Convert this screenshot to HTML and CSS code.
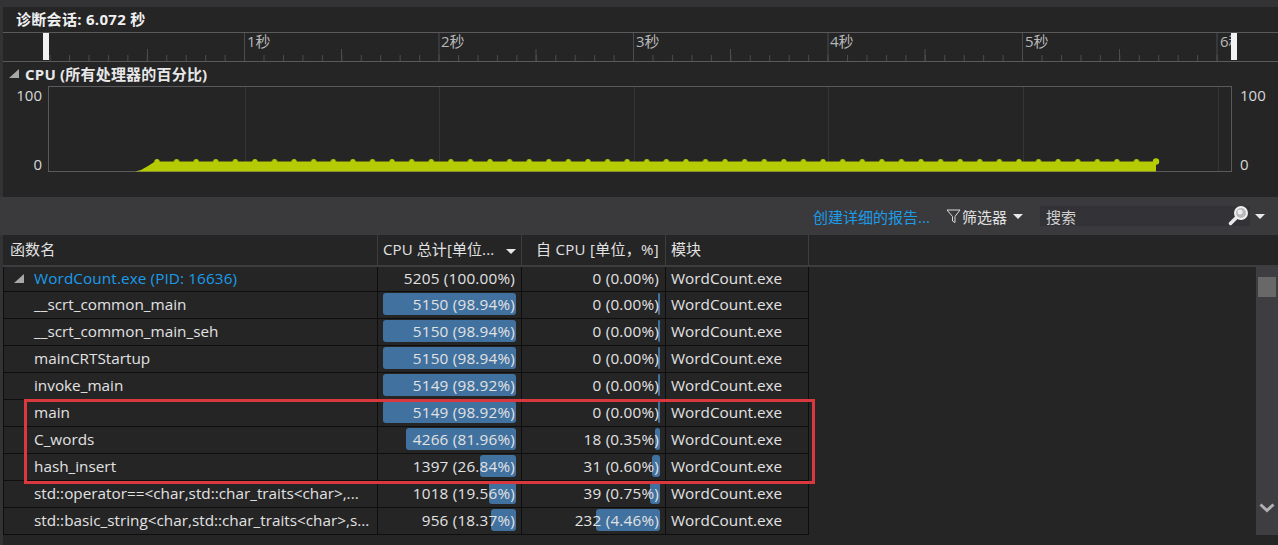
FILE: index.html
```html
<!DOCTYPE html>
<html lang="zh-CN">
<head>
    <meta charset="UTF-8">
    <title>诊断会话</title>
    <link rel="stylesheet" href="styles.css">
</head>
<body>
    <div class="app">
        <div class="session-title">诊断会话: 6.072 秒</div>

        <!-- 时间标尺 -->
        <svg class="ruler" width="1275" height="30" viewBox="3 32 1275 30">
            <defs>
                <pattern id="minor-ticks" x="69" y="54" width="19.45" height="7" patternUnits="userSpaceOnUse">
                    <rect x="0" y="1" width="1" height="6" fill="#4a4a4c"/>
                </pattern>
                <clipPath id="ruler-clip"><rect x="0" y="32" width="1231" height="30"/></clipPath>
            </defs>
            <rect x="49" y="54" width="1182" height="7" fill="url(#minor-ticks)"/>
            <path class="ruler-line" d="M3 32.5H1278M3 61.5H1278"/>
            <path class="ruler-major" d="M244.5 33V61M439 33V61M633.5 33V61M828 33V61M1022.5 33V61M1217 33V61M147.5 49V61M341.5 49V61M536 49V61M730.5 49V61M925 49V61M1119.5 49V61"/>
            <text x="247" y="47">1秒</text>
            <text x="441" y="47">2秒</text>
            <text x="636" y="47">3秒</text>
            <text x="830" y="47">4秒</text>
            <text x="1025" y="47">5秒</text>
            <text x="1220" y="47" clip-path="url(#ruler-clip)">6秒</text>
            <rect class="handle" x="43" y="33" width="6" height="27"/>
            <rect class="handle" x="1231" y="33" width="6" height="27"/>
        </svg>

        <div class="cpu-title"><span class="arrow-open"></span>CPU (所有处理器的百分比)</div>

        <div class="chart-row">
            <div class="axis axis-left"><span>100</span><span>0</span></div>
            <svg class="chart" width="1185" height="87" viewBox="48 86 1185 87">
                <defs>
                    <pattern id="cpu-dots" x="157" y="155" width="19.59" height="10" patternUnits="userSpaceOnUse">
                        <circle cx="0" cy="6.5" r="2.6"/>
                        <circle cx="19.59" cy="6.5" r="2.6"/>
                    </pattern>
                </defs>
                <rect class="chart-box" x="48.5" y="86.5" width="1183" height="85"/>
                <path class="chart-grid" d="M245.5 87V171M439.5 87V171M634.5 87V171M828.5 87V171M1023.5 87V171M1218.5 87V171"/>
                <path class="cpu-area" d="M135 171.5L141 170L148 166L155 161.5L1156 161.5V171.5Z"/>
                <rect class="cpu-dots" x="154" y="155" width="990" height="8"/>
                <circle class="cpu-end" cx="1156" cy="161.5" r="3.2"/>
            </svg>
            <div class="axis axis-right"><span>100</span><span>0</span></div>
        </div>

        <div class="toolbar">
            <a class="report-link">创建详细的报告...</a>
            <div class="filter">
                <svg width="15" height="16" viewBox="0 0 15 16"><path d="M1 2H14L9 8.5V14.5L6.5 13V8.5Z" fill="none" stroke="#d8d8d8"/></svg>
                <span>筛选器</span>
                <span class="caret"></span>
            </div>
            <div class="search">
                <span>搜索</span>
                <svg width="22" height="22" viewBox="0 0 22 22">
                    <path d="M8 13L2.5 18.5" stroke="#e8e8e8" stroke-width="3.5" stroke-linecap="round"/>
                    <circle cx="13" cy="8" r="6" fill="#b8b8b8" stroke="#efefef" stroke-width="2"/>
                    <circle cx="12" cy="7" r="2.5" fill="#ececec"/>
                </svg>
            </div>
            <span class="caret search-caret"></span>
        </div>

        <div class="table-head">
            <div class="th col-name">函数名</div>
            <div class="th col-num">CPU 总计[单位...<span class="caret sort-caret"></span></div>
            <div class="th col-num th-right">自 CPU [单位，%]</div>
            <div class="th col-mod">模块</div>
        </div>

        <div class="table-body">
            <div class="rows">
                <div class="row row-first">
                    <div class="cell col-name name-root"><span class="arrow-open"></span>WordCount.exe (PID: 16636)</div>
                    <div class="cell col-num"><span class="val">5205 (100.00%)</span></div>
                    <div class="cell col-num"><span class="val">0 (0.00%)</span></div>
                    <div class="cell col-mod">WordCount.exe</div>
                </div>
                <div class="row">
                    <div class="cell col-name">__scrt_common_main</div>
                    <div class="cell col-num"><i class="bar" style="width:133px"></i><span class="val">5150 (98.94%)</span></div>
                    <div class="cell col-num"><i class="bar" style="width:2px"></i><span class="val">0 (0.00%)</span></div>
                    <div class="cell col-mod">WordCount.exe</div>
                </div>
                <div class="row">
                    <div class="cell col-name">__scrt_common_main_seh</div>
                    <div class="cell col-num"><i class="bar" style="width:133px"></i><span class="val">5150 (98.94%)</span></div>
                    <div class="cell col-num"><i class="bar" style="width:2px"></i><span class="val">0 (0.00%)</span></div>
                    <div class="cell col-mod">WordCount.exe</div>
                </div>
                <div class="row">
                    <div class="cell col-name">mainCRTStartup</div>
                    <div class="cell col-num"><i class="bar" style="width:133px"></i><span class="val">5150 (98.94%)</span></div>
                    <div class="cell col-num"><i class="bar" style="width:2px"></i><span class="val">0 (0.00%)</span></div>
                    <div class="cell col-mod">WordCount.exe</div>
                </div>
                <div class="row">
                    <div class="cell col-name">invoke_main</div>
                    <div class="cell col-num"><i class="bar" style="width:133px"></i><span class="val">5149 (98.92%)</span></div>
                    <div class="cell col-num"><i class="bar" style="width:2px"></i><span class="val">0 (0.00%)</span></div>
                    <div class="cell col-mod">WordCount.exe</div>
                </div>
                <div class="row">
                    <div class="cell col-name">main</div>
                    <div class="cell col-num"><i class="bar" style="width:133px"></i><span class="val">5149 (98.92%)</span></div>
                    <div class="cell col-num"><i class="bar" style="width:2px"></i><span class="val">0 (0.00%)</span></div>
                    <div class="cell col-mod">WordCount.exe</div>
                </div>
                <div class="row">
                    <div class="cell col-name">C_words</div>
                    <div class="cell col-num"><i class="bar" style="width:110px"></i><span class="val">4266 (81.96%)</span></div>
                    <div class="cell col-num"><i class="bar" style="width:5px"></i><span class="val">18 (0.35%)</span></div>
                    <div class="cell col-mod">WordCount.exe</div>
                </div>
                <div class="row">
                    <div class="cell col-name">hash_insert</div>
                    <div class="cell col-num"><i class="bar" style="width:36px"></i><span class="val">1397 (26.84%)</span></div>
                    <div class="cell col-num"><i class="bar" style="width:8px"></i><span class="val">31 (0.60%)</span></div>
                    <div class="cell col-mod">WordCount.exe</div>
                </div>
                <div class="row">
                    <div class="cell col-name">std::operator==&lt;char,std::char_traits&lt;char&gt;,...</div>
                    <div class="cell col-num"><i class="bar" style="width:27px"></i><span class="val">1018 (19.56%)</span></div>
                    <div class="cell col-num"><i class="bar" style="width:10px"></i><span class="val">39 (0.75%)</span></div>
                    <div class="cell col-mod">WordCount.exe</div>
                </div>
                <div class="row">
                    <div class="cell col-name">std::basic_string&lt;char,std::char_traits&lt;char&gt;,s...</div>
                    <div class="cell col-num"><i class="bar" style="width:25px"></i><span class="val">956 (18.37%)</span></div>
                    <div class="cell col-num"><i class="bar" style="width:64px"></i><span class="val">232 (4.46%)</span></div>
                    <div class="cell col-mod">WordCount.exe</div>
                </div>
                <div class="highlight"></div>
            </div>
            <div class="scrollbar">
                <div class="thumb"></div>
                <svg class="scroll-down" width="16" height="10" viewBox="0 0 16 10"><path d="M1.5 1.5L8 7.5L14.5 1.5" fill="none" stroke="#b0b0b0" stroke-width="3"/></svg>
            </div>
        </div>
    </div>
</body>
</html>
```

FILE: styles.css
```css
* {
    box-sizing: border-box;
}

body {
    margin: 0;
    background: #252526;
    color: #e2e2e2;
    font-family: "Open Sans", "Noto Sans CJK SC", sans-serif;
    font-size: 15px;
    overflow: hidden;
}

.app {
    width: 1278px;
    height: 545px;
    padding-left: 3px;
    border-top: 7px solid #333336;
    background: #252526;
    box-shadow: inset 3px 0 0 #333336;
    display: flex;
    flex-direction: column;
}

.session-title {
    height: 25px;
    padding-left: 13px;
    font-size: 15px;
    font-weight: 700;
    line-height: 24px;
    letter-spacing: 0.3px;
    color: #f0f0f0;
    white-space: nowrap;
}

.ruler {
    display: block;
    flex: none;
}

.ruler text {
    font-family: "Open Sans", "Noto Sans CJK SC", sans-serif;
    font-size: 15px;
    fill: #b8b8b8;
}

.ruler-line {
    stroke: #5a5a5c;
}

.ruler-major {
    stroke: #4c4c4e;
}

.handle {
    fill: #f2f2f2;
}

.cpu-title {
    height: 25px;
    padding: 0 0 2px 6px;
    font-size: 15px;
    font-weight: 700;
    letter-spacing: 0.2px;
    color: #e8e8e8;
    display: flex;
    align-items: center;
}

.arrow-open {
    width: 0;
    height: 0;
    margin-right: 6px;
    border-style: solid;
    border-width: 0 0 9px 10px;
    border-color: transparent transparent #a8a8a8 transparent;
}

.chart-row {
    height: 87px;
    display: flex;
}

.chart {
    display: block;
    flex: none;
}

.chart-box {
    fill: #252526;
    stroke: #5a5a5c;
}

.chart-grid {
    stroke: #363638;
}

.cpu-area,
.cpu-end,
#cpu-dots circle {
    fill: #b5cc04;
}

.cpu-dots {
    fill: url(#cpu-dots);
}

.axis {
    width: 45px;
    flex: none;
    font-size: 15px;
    line-height: 18px;
    display: flex;
    flex-direction: column;
    justify-content: space-between;
    color: #d8d8d8;
}

.axis-left {
    text-align: right;
    padding-right: 6px;
}

.axis-right {
    padding-left: 7px;
}

.toolbar {
    height: 38px;
    margin-top: 24px;
    margin-left: -3px;
    padding-right: 13px;
    background: #3a3a3d;
    display: flex;
    align-items: center;
    justify-content: flex-end;
}

.report-link {
    width: 133px;
    color: #1c9ce8;
    white-space: nowrap;
}

.filter {
    width: 94px;
    display: flex;
    align-items: center;
    color: #e2e2e2;
}

.filter svg {
    margin-right: 1px;
}

.caret {
    display: inline-block;
    width: 0;
    height: 0;
    border-style: solid;
    border-width: 5px 5px 0 5px;
    border-color: #e8e8e8 transparent transparent transparent;
}

.filter .caret {
    margin-left: 6px;
}

.search {
    width: 210px;
    height: 20px;
    padding: 0 0 0 6px;
    background: #333337;
    color: #d0d0d0;
    display: flex;
    align-items: center;
    justify-content: space-between;
}

.search-caret {
    margin-left: 5px;
}

.table-head {
    height: 32px;
    flex: none;
    border-bottom: 2px solid #3d3d3f;
    display: flex;
    align-items: stretch;
}

.col-name {
    width: 375px;
}

.col-num {
    width: 144px;
}

.col-mod {
    width: 143px;
}

.th {
    padding-left: 5px;
    line-height: 28px;
    letter-spacing: 0.1px;
    border-right: 1px solid #3d3d3f;
    white-space: nowrap;
    position: relative;
}

.th.col-name {
    padding-left: 7px;
}

.th-right {
    text-align: right;
    padding-right: 6px;
    letter-spacing: 0.3px;
}

.sort-caret {
    position: absolute;
    right: 5px;
    top: 14px;
}

.table-body {
    height: 269px;
    display: flex;
    margin-bottom: 10px;
}

.rows {
    width: 1253px;
    position: relative;
}

.row {
    width: 806px;
    height: 27px;
    display: flex;
    border-bottom: 1px solid #0e0e0e;
}

.row-first {
    height: 25px;
}

.row-first .cell {
    line-height: 23px;
}

.cell {
    border-right: 1px solid #0e0e0e;
    line-height: 25px;
    white-space: nowrap;
    position: relative;
    font-size: 15.3px;
    color: #e2e2e2;
}

.col-name.cell {
    padding-left: 30px;
    border-left: 1px solid #0e0e0e;
}

.col-mod.cell {
    padding-left: 5px;
}

.name-root {
    display: flex;
    align-items: center;
    color: #1c9ce8;
    letter-spacing: 0.1px;
}

.cell.name-root {
    padding: 0 0 2px 10px;
}

.name-root .arrow-open {
    margin-right: 10px;
}

.col-num.cell {
    text-align: right;
    padding-right: 6px;
}

.bar {
    position: absolute;
    right: 5px;
    top: 1px;
    height: 22px;
    background: #41719f;
    border-radius: 3px;
}

.val {
    position: relative;
    letter-spacing: 0.2px;
}

.highlight {
    position: absolute;
    left: 21px;
    top: 132px;
    width: 791px;
    height: 85px;
    border: 3px solid #d8383e;
    pointer-events: none;
}

.scrollbar {
    width: 22px;
    background: #3e3e42;
    position: relative;
}

.thumb {
    width: 18px;
    height: 20px;
    margin: 10px 0 0 2px;
    background: #686868;
}

.scroll-down {
    position: absolute;
    left: 3px;
    top: 236px;
}
```
